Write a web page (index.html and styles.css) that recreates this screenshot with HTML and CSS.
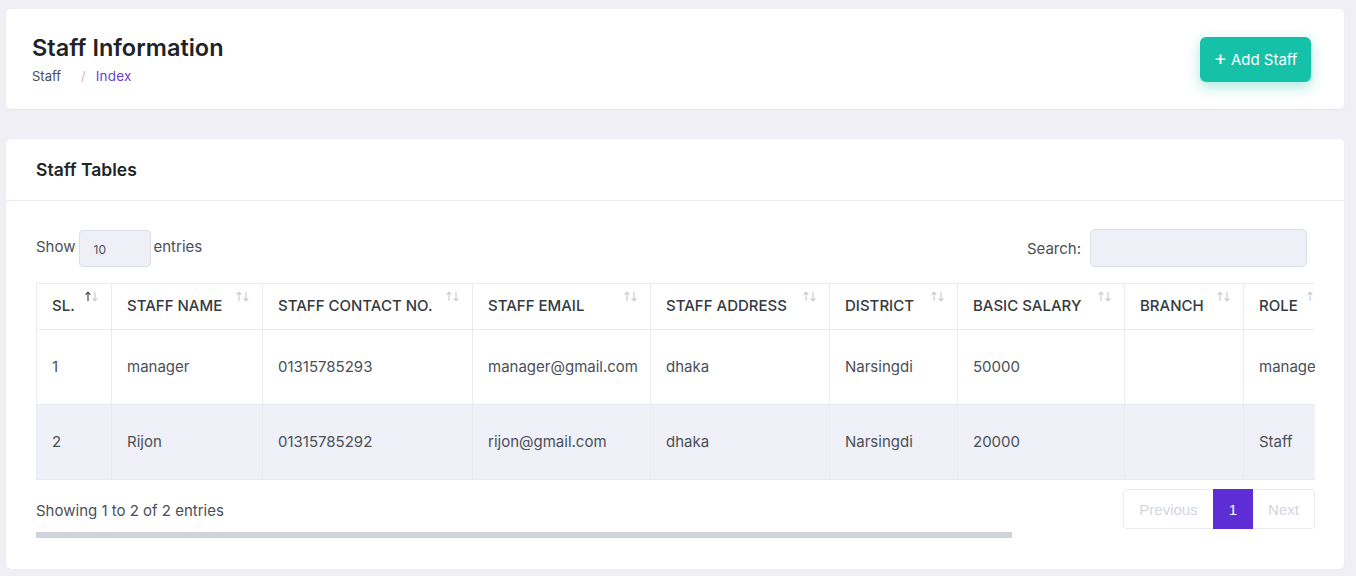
FILE: index.html
```html
<!DOCTYPE html>
<html lang="en">
<head>
<meta charset="utf-8">
<title>Staff Information</title>
<link rel="stylesheet" href="styles.css">
</head>
<body>
<div class="page">
  <section class="card head-card">
    <div class="head-text">
      <h1 class="title">Staff Information</h1>
      <nav class="crumbs">
        <span class="crumb">Staff</span>
        <span class="crumb-sep">/</span>
        <span class="crumb-active">Index</span>
      </nav>
    </div>
    <button class="add-btn"><span class="plus">+</span> Add Staff</button>
  </section>

  <section class="card table-card">
    <div class="card-header">Staff Tables</div>
    <div class="card-body">
      <div class="controls">
        <label class="length">Show
          <select class="length-select"><option>10</option></select>
          entries</label>
        <label class="search">Search:
          <input class="search-input" type="text">
        </label>
      </div>
      <div class="scroller">
        <table class="grid">
          <colgroup>
            <col style="width:75px"><col style="width:151px"><col style="width:210px"><col style="width:178px"><col style="width:179px"><col style="width:128px"><col style="width:167px"><col style="width:119px"><col style="width:90px"><col style="width:343px">
          </colgroup>
          <thead>
            <tr>
              <th>SL.<span class="sort asc"><svg width="16" height="11" viewBox="0 0 16 11"><path class="up" d="M4 10V1.2M1.6 3.6L4 1.2L6.4 3.6"/><path class="down" d="M11 1V9.8M8.6 7.4L11 9.8L13.4 7.4"/></svg></span></th>
              <th>STAFF NAME<span class="sort"><svg width="16" height="11" viewBox="0 0 16 11"><path class="up" d="M4 10V1.2M1.6 3.6L4 1.2L6.4 3.6"/><path class="down" d="M11 1V9.8M8.6 7.4L11 9.8L13.4 7.4"/></svg></span></th>
              <th>STAFF CONTACT NO.<span class="sort"><svg width="16" height="11" viewBox="0 0 16 11"><path class="up" d="M4 10V1.2M1.6 3.6L4 1.2L6.4 3.6"/><path class="down" d="M11 1V9.8M8.6 7.4L11 9.8L13.4 7.4"/></svg></span></th>
              <th>STAFF EMAIL<span class="sort"><svg width="16" height="11" viewBox="0 0 16 11"><path class="up" d="M4 10V1.2M1.6 3.6L4 1.2L6.4 3.6"/><path class="down" d="M11 1V9.8M8.6 7.4L11 9.8L13.4 7.4"/></svg></span></th>
              <th>STAFF ADDRESS<span class="sort"><svg width="16" height="11" viewBox="0 0 16 11"><path class="up" d="M4 10V1.2M1.6 3.6L4 1.2L6.4 3.6"/><path class="down" d="M11 1V9.8M8.6 7.4L11 9.8L13.4 7.4"/></svg></span></th>
              <th>DISTRICT<span class="sort"><svg width="16" height="11" viewBox="0 0 16 11"><path class="up" d="M4 10V1.2M1.6 3.6L4 1.2L6.4 3.6"/><path class="down" d="M11 1V9.8M8.6 7.4L11 9.8L13.4 7.4"/></svg></span></th>
              <th>BASIC SALARY<span class="sort"><svg width="16" height="11" viewBox="0 0 16 11"><path class="up" d="M4 10V1.2M1.6 3.6L4 1.2L6.4 3.6"/><path class="down" d="M11 1V9.8M8.6 7.4L11 9.8L13.4 7.4"/></svg></span></th>
              <th>BRANCH<span class="sort"><svg width="16" height="11" viewBox="0 0 16 11"><path class="up" d="M4 10V1.2M1.6 3.6L4 1.2L6.4 3.6"/><path class="down" d="M11 1V9.8M8.6 7.4L11 9.8L13.4 7.4"/></svg></span></th>
              <th>ROLE<span class="sort"><svg width="16" height="11" viewBox="0 0 16 11"><path class="up" d="M4 10V1.2M1.6 3.6L4 1.2L6.4 3.6"/><path class="down" d="M11 1V9.8M8.6 7.4L11 9.8L13.4 7.4"/></svg></span></th>
              <th></th>
            </tr>
          </thead>
          <tbody>
            <tr>
              <td>1</td><td>manager</td><td>01315785293</td><td>manager@gmail.com</td><td>dhaka</td><td>Narsingdi</td><td>50000</td><td></td><td>manager</td><td></td>
            </tr>
            <tr class="alt">
              <td>2</td><td>Rijon</td><td>01315785292</td><td>rijon@gmail.com</td><td>dhaka</td><td>Narsingdi</td><td>20000</td><td></td><td>Staff</td><td></td>
            </tr>
          </tbody>
        </table>
        <div class="table-foot">
          <div class="info">Showing 1 to 2 of 2 entries</div>
          <div class="pager">
            <span class="page-btn disabled">Previous</span>
            <span class="page-btn current">1</span>
            <span class="page-btn disabled">Next</span>
          </div>
        </div>
      </div>
      <div class="hscroll"><div class="hscroll-thumb" style="width:976px"></div></div>
    </div>
  </section>
</div>
</body>
</html>
```
FILE: styles.css
```css
* { box-sizing: border-box; }
html, body { margin: 0; }
body {
  background: #efeff5;
  font-family: "Inter", "Noto Sans", sans-serif;
  color: #495057;
  overflow: hidden;
}
.page {
  padding: 9px 12px 0 6px;
  display: flex;
  flex-direction: column;
  gap: 30px;
}
.card {
  background: #fff;
  border-radius: 5px;
  box-shadow: 0 1px 3px rgba(30, 30, 60, 0.04);
}
.head-card {
  height: 100px;
  padding: 24px 33px 22px 26px;
  display: flex;
  align-items: center;
  justify-content: space-between;
}
.title {
  margin: 0;
  font-size: 23.5px;
  line-height: 28px;
  font-weight: 600;
  color: #1f2328;
}
.crumbs {
  margin-top: 4px;
  font-size: 13px;
  line-height: 20px;
  display: flex;
  align-items: center;
}
.crumb { color: #495057; }
.crumb-sep { color: #f0a8b8; margin: 0 10px 0 20px; }
.crumb-active { color: #6a42d6; font-size: 13.5px; letter-spacing: 0.2px; }
.add-btn {
  width: 111px;
  height: 45px;
  border: 0;
  border-radius: 6px;
  background: #15c1a8;
  color: #fff;
  font-family: inherit;
  font-size: 15px;
  box-shadow: 0 5px 14px rgba(21, 193, 168, 0.35);
  display: flex;
  align-items: center;
  justify-content: center;
  gap: 4px;
  padding: 0;
  margin-top: -2px;
}
.plus { font-size: 20px; line-height: 1; margin-top: -3px; }

.table-card { height: 430px; }
.card-header {
  height: 62px;
  padding: 0 30px;
  display: flex;
  align-items: center;
  font-size: 17.5px;
  font-weight: 600;
  color: #212529;
  border-bottom: 1px solid #e9ebf0;
}
.card-body { padding: 28px 29px 31px 30px; }
.controls {
  display: flex;
  justify-content: space-between;
  align-items: center;
  font-size: 15px;
  color: #495057;
  height: 38px;
}
.length { display: flex; align-items: center; gap: 3px; margin-top: -3px; }
.length-select {
  -webkit-appearance: none;
  appearance: none;
  width: 72px;
  height: 37px;
  margin-top: 3px;
  border: 1px solid #dcdfe8;
  border-radius: 4px;
  background: #eff0f7;
  font-family: inherit;
  font-size: 12px;
  color: #495057;
  padding: 3px 0 0 14px;
}
.search { display: flex; align-items: center; gap: 9px; margin-right: 8px; }
.search-input {
  width: 217px;
  height: 38px;
  border: 1px solid #dcdfe8;
  border-radius: 5px;
  background: #eff0f7;
}
.scroller {
  margin-top: 16px;
  overflow: hidden;
}
.grid {
  border-collapse: collapse;
  table-layout: fixed;
  width: 1640px;
  font-size: 15px;
}
.grid th, .grid td {
  border: 1px solid #e9ebf0;
  text-align: left;
  white-space: nowrap;
  overflow: hidden;
}
.grid th {
  position: relative;
  height: 46px;
  padding: 0 30px 2px 15px;
  font-weight: 500;
  color: #343a40;
  vertical-align: middle;
}
.grid td {
  height: 75px;
  padding: 0 15px 2px;
  color: #495057;
}
.grid tr.alt td { background: #f0f0f8; }
.sort {
  position: absolute;
  right: 11px;
  top: 7px;
  line-height: 0;
}
.sort path { fill: none; stroke: #c4c8d0; stroke-width: 1.1; }
.sort.asc .up { stroke: #343a40; }
.table-foot {
  margin-top: 9px;
  height: 40px;
  display: flex;
  justify-content: space-between;
  align-items: center;
  font-size: 15px;
}
.info { color: #495057; padding-top: 2px; }
.pager {
  display: flex;
  height: 40px;
  border: 1px solid #e9ebf0;
  border-radius: 4px;
  font-family: "Liberation Sans", Arial, sans-serif;
  font-size: 15px;
}
.page-btn {
  display: flex;
  align-items: center;
  justify-content: center;
  height: 38px;
}
.page-btn.disabled { color: #d2d6dd; }
.page-btn:first-child { width: 89px; }
.page-btn.current {
  width: 40px;
  height: 40px;
  margin-top: -1px;
  background: #5e2dd5;
  color: #fff;
}
.page-btn:last-child { width: 61px; }
.hscroll {
  margin-top: 3px;
  height: 6px;
}
.hscroll-thumb {
  height: 6px;
  background: #cfd3db;
}
```
